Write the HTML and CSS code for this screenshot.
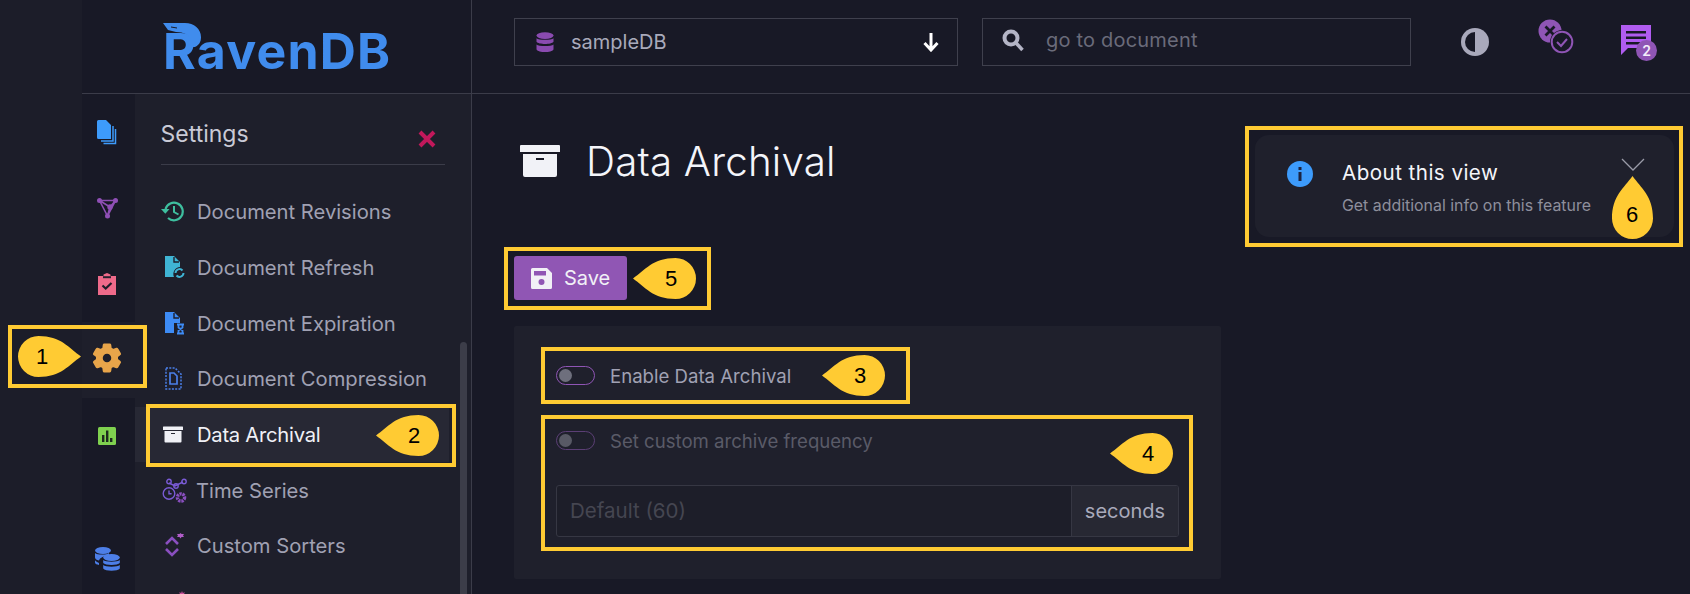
FILE: index.html
```html
<!DOCTYPE html>
<html>
<head>
<meta charset="utf-8">
<title>Data Archival</title>
<link rel="stylesheet" href="styles.css">
</head>
<body>
<svg class="defs" width="0" height="0">
	<symbol id="dropH" viewBox="0 0 63 41"><path d="M0 20.500C12 12 20 0 42.500 0a20.500 20.500 0 0 1 0 41C20 41 12 29 0 20.500z"/></symbol>
	<symbol id="dropV" viewBox="0 0 41 63"><path d="M20.500 0C12 12 0 20 0 42.500a20.500 20.500 0 0 0 41 0C41 20 29 12 20.500 0z"/></symbol>
	<symbol id="archive" viewBox="0 0 40 32"><path d="M1 0h38a1 1 0 0 1 1 1v6H0V1a1 1 0 0 1 1-1zM3 9h34v21a2 2 0 0 1-2 2H5a2 2 0 0 1-2-2zm13 4v2h8v-2z" fill-rule="evenodd"/></symbol>
</svg>

<div class="app">
	<div class="strip"></div>
	<div class="main">
		<header class="top">
			<div class="brand">
				<span class="logo">RavenDB</span>
				<svg class="beak" width="38" height="24" viewBox="0 0 38 24"><path d="M0 0h22c9 0 16 6 16 14 0 5-2 8-6 10H24c3-3 4-6 3-8-1-4-6-7-14-7L5 7z"/><path d="M8 4l6 1" stroke="#181926" stroke-width="1"/></svg>
			</div>
			<div class="topbar">
				<div class="field field-db">
					<svg width="18" height="21" viewBox="0 0 18 21"><g fill="#8a4bb0"><ellipse cx="9" cy="3.600" rx="8.500" ry="3.400"/><path d="M.5 6.200c2 2 15 2 17 0v3.600c-2 3-15 3-17 0zM.5 12.400c2 2 15 2 17 0v5c-2 3.500-15 3.500-17 0z"/></g></svg>
					<span class="field-text">sampleDB</span>
					<svg width="16" height="19" viewBox="0 0 16 19"><path d="M8 0v16M1.500 10L8 17l6.500-7" fill="none" stroke="#fff" stroke-width="3"/></svg>
				</div>
				<div class="field field-search">
					<svg width="22" height="23" viewBox="0 0 22 23"><circle cx="9" cy="9" r="6.500" fill="none" stroke="#b4b5c6" stroke-width="4"/><path d="M14 14l6.500 7" stroke="#b4b5c6" stroke-width="3.500"/></svg>
					<span class="placeholder">go to document</span>
				</div>
				<div class="top-icons">
					<svg width="28" height="28" viewBox="0 0 28 28"><circle cx="14" cy="14" r="14" fill="#a9a9bb"/><path d="M14 4a10 10 0 0 0 0 20z" fill="#181926"/></svg>
					<svg class="ic-status" width="36" height="35" viewBox="0 0 36 35"><circle cx="12" cy="12" r="11.500" fill="#8f55b5"/><path d="M7.500 7.500l9 9m0-9l-9 9" stroke="#181926" stroke-width="2.800"/><circle cx="24" cy="23" r="12" fill="#181926"/><circle cx="24" cy="23" r="10.300" fill="none" stroke="#8f55b5" stroke-width="2"/><path d="M19 23l4 4 6-7" fill="none" stroke="#8f55b5" stroke-width="2"/></svg>
					<div class="notify">
						<svg width="30" height="30" viewBox="0 0 30 30"><path d="M0 0h30v23H7l-7 7zM5 6v2.500h20V6zm0 5.500V14h20v-2.500zM5 17v2.500h14V17z" fill="#b05cf0" fill-rule="evenodd"/></svg>
						<span class="badge">2</span>
					</div>
				</div>
			</div>
		</header>

		<div class="below">
			<nav class="rail">
				<div class="rail-item">
					<svg width="20" height="25" viewBox="0 0 20 25"><path d="M1.500 0H9l5 5v14H1.500A1.500 1.500 0 0 1 0 17.500v-16A1.500 1.500 0 0 1 1.500 0z" fill="#3d9bfb"/><path d="M16 6v15H4M18.500 9v14.500H6.500" fill="none" stroke="#3d9bfb" stroke-width="1.500"/></svg>
				</div>
				<div class="rail-item">
					<svg width="21" height="21" viewBox="0 0 21 21"><g fill="none" stroke="#8f4fb5" stroke-width="1.600"><path d="M2.500 2.500l8 15.500L18.500 2.500zM2.500 2.500L13 9M18.500 2.500L13 9M10.500 18L13 9"/></g><g fill="#8f4fb5"><circle cx="2.500" cy="2.500" r="2.500"/><circle cx="18.500" cy="2.500" r="2.500"/><circle cx="10.500" cy="18" r="2.500"/><circle cx="13" cy="9" r="2.700"/></g></svg>
				</div>
				<div class="rail-item">
					<svg width="18" height="22" viewBox="0 0 18 22"><path d="M0 3h5.500V1.500L9 0l3.500 1.500V3H18v19H0z" fill="#ee6a8a"/><path d="M5 3.200h8v2H5z" fill="#26212e"/><path d="M4.500 12.500l3.200 3 5.800-5.500" fill="none" stroke="#1c1d29" stroke-width="2.200"/></svg>
				</div>
				<div class="rail-item rail-active">
					<svg width="34" height="34" viewBox="0 0 24 24"><path d="M19.140 12.940c.04-.3.060-.61.060-.94 0-.32-.02-.64-.07-.94l2.030-1.580c.18-.14.230-.41.120-.61l-1.920-3.320c-.12-.22-.37-.29-.59-.22l-2.390.96c-.5-.38-1.030-.7-1.620-.94l-.36-2.540c-.04-.24-.24-.41-.48-.41h-3.840c-.24 0-.43.170-.47.410l-.36 2.540c-.59.240-1.130.570-1.620.940l-2.390-.96c-.22-.08-.47 0-.59.220L2.740 8.870c-.12.210-.08.470.120.610l2.030 1.580c-.05.300-.09.630-.09.940s.020.640.070.940l-2.030 1.580c-.18.140-.23.410-.12.610l1.920 3.320c.12.220.370.290.590.220l2.390-.96c.5.380 1.030.700 1.620.940l.36 2.540c.05.240.240.410.480.410h3.840c.24 0 .44-.17.470-.41l.36-2.540c.59-.24 1.130-.56 1.620-.94l2.390.96c.22.080.47 0 .59-.22l1.920-3.320c.12-.22.070-.47-.12-.61l-2.010-1.580zM12 15.600c-1.980 0-3.600-1.620-3.600-3.600s1.620-3.600 3.600-3.600 3.600 1.620 3.600 3.600-1.620 3.600-3.600 3.600z" fill="#e8a54a" stroke="#e8a54a" stroke-width="1.200"/></svg>
				</div>
				<div class="rail-item">
					<svg width="18" height="18" viewBox="0 0 18 18"><rect width="18" height="18" rx="1.500" fill="#7fd14f"/><path d="M4 8h2.400v7H4zM8 3.500h2.400V15H8zM12 11h2.400v4H12z" fill="#1c2a1e"/></svg>
				</div>
				<div class="rail-item rail-last">
					<svg width="25" height="25" viewBox="0 0 25 25"><g fill="#4d7fe8"><ellipse cx="8" cy="3.500" rx="8" ry="3.500"/><path d="M0 6c2 2 12 2 14 0v2.500c-8 1-9 3-10 5-3-.5-4-2-4-3zM0 13c0 1 2 2 4 3v2c-2-.5-4-1-4-2.500z"/><ellipse cx="16.500" cy="10.500" rx="8.300" ry="3.500"/><path d="M8.200 13c2 2.200 14.600 2.200 16.600 0v3c-2 2.500-14.600 2.500-16.600 0zM8.200 18c2 2.200 14.600 2.200 16.600 0v3.500c-2 3-14.600 3-16.600 0z"/></g></svg>
				</div>
			</nav>

			<aside class="sidebar">
				<div class="side-head">
					<span class="side-title">Settings</span>
					<svg width="18" height="18" viewBox="0 0 18 18"><path d="M2 2l14 14M16 2L2 16" stroke="#c2185b" stroke-width="4"/></svg>
				</div>
				<ul class="menu">
					<li class="menu-item">
						<span class="menu-icon"><svg width="24" height="21" viewBox="0 0 24 21"><path d="M4.500 8a8.800 8.800 0 1 1 2.500 9" fill="none" stroke="#3ebf9f" stroke-width="2.200"/><path d="M0 8h8.500l-4.200 4.800z" fill="#3ebf9f"/><path d="M13 5v6l4.500 2.500" fill="none" stroke="#3ebf9f" stroke-width="2"/></svg></span>
						Document Revisions
					</li>
					<li class="menu-item">
						<span class="menu-icon"><svg class="ic-doc" width="21" height="23" viewBox="0 0 21 23"><path d="M0 0h9l6 6v5a7 7 0 0 0-6 10H0z" fill="#3fb4d4"/><path d="M9 1v5h5" fill="none" stroke="#1e1f2b" stroke-width="1.400"/><path d="M10.500 17a4 4 0 0 1 7-2.500M18.500 17a4 4 0 0 1-7 2.500" fill="none" stroke="#3fb4d4" stroke-width="2"/></svg></span>
						Document Refresh
					</li>
					<li class="menu-item">
						<span class="menu-icon"><svg class="ic-doc" width="21" height="23" viewBox="0 0 21 23"><path d="M0 0h9l6 6v5H9v10H0z" fill="#3d8bf5"/><path d="M9 1v5h5" fill="none" stroke="#1e1f2b" stroke-width="1.400"/><path d="M12 12.500h7M12 21.500h7M13.500 13v2.500l4 3v2.500M17.500 13v2.500l-4 3v2.500" fill="none" stroke="#3d8bf5" stroke-width="1.800"/></svg></span>
						Document Expiration
					</li>
					<li class="menu-item">
						<span class="menu-icon"><svg class="ic-doc" width="17" height="23" viewBox="0 0 17 23"><path d="M1 1h9l6 6v15H1z" fill="none" stroke="#4a7fe8" stroke-width="1.500" stroke-dasharray="2 1.300"/><path d="M5 6h4l3 3v8H5z" fill="none" stroke="#4a7fe8" stroke-width="1.700"/></svg></span>
						Document Compression
					</li>
					<li class="menu-item menu-active">
						<span class="menu-icon"><svg class="ic-box" width="20" height="17"><use href="#archive"/></svg></span>
						<span class="active-text">Data Archival</span>
					</li>
					<li class="menu-item menu-time">
						<span class="menu-icon"><svg width="26" height="25" viewBox="0 0 26 25"><g fill="none" stroke="#7a5bd6" stroke-width="1.400"><circle cx="8" cy="15.500" r="5.800"/><path d="M8 12.500v3.300h2.600M8 5l6 3 8-4"/><circle cx="8" cy="3.500" r="2.200"/><circle cx="15" cy="8" r="2.200"/><circle cx="23" cy="3.500" r="2.200"/></g><circle cx="20" cy="19.500" r="3.600" fill="none" stroke="#8a4fc0" stroke-width="3.400" stroke-dasharray="2.200 .8"/></svg></span>
						Time Series
					</li>
					<li class="menu-item">
						<span class="menu-icon"><svg class="ic-sort" width="20" height="24" viewBox="0 0 20 24"><path d="M1 11l6-6 6 6M1 16l6 6 6-6" fill="none" stroke="#8a4fc0" stroke-width="2.600"/><path d="M12 4l1-1.500L12 1h2.500L15.500 0l1 1H19l-1 1.500L19 4h-2.500l-1 1.500-1-1.500z" fill="#b05cc8"/></svg></span>
						Custom Sorters
					</li>
					<li class="menu-item">
						<span class="menu-icon"><svg class="ic-star" width="8" height="8" viewBox="0 0 8 8"><path d="M4 0l.8 2 2-.7-.8 2 2 1-2 .8.800 2-2-.800-.8 2-.8-2-2 .8.800-2-2-.8 2-1-.8-2 2 .7z" fill="#c74f9b"/></svg></span>
					</li>
				</ul>
				<div class="scroll-thumb"></div>
			</aside>

			<main class="content">
				<div class="col-main">
					<div class="page-title">
						<svg class="title-icon" width="40" height="32"><use href="#archive"/></svg>
						<h1>Data Archival</h1>
					</div>
					<button class="save-btn">
						<svg width="21" height="21" viewBox="0 0 21 21"><path d="M1.500 0H16l5 5v14.500a1.500 1.500 0 0 1-1.500 1.500h-18A1.500 1.500 0 0 1 0 19.500v-18A1.500 1.500 0 0 1 1.500 0zM3 3v4.500h12V3zm7.500 8a3 3 0 1 0 0 6 3 3 0 0 0 0-6z" fill="#f1f0f6" fill-rule="evenodd"/></svg>
						Save
					</button>
					<section class="panel">
						<div class="toggle-row">
							<span class="toggle"></span>
							<span class="toggle-label">Enable Data Archival</span>
						</div>
						<div class="toggle-row is-off">
							<span class="toggle"></span>
							<span class="toggle-label">Set custom archive frequency</span>
						</div>
						<div class="input-group">
							<span class="input-ph">Default (60)</span>
							<span class="input-addon">seconds</span>
						</div>
					</section>
				</div>
				<div class="col-side">
					<div class="about">
						<svg width="26" height="26" viewBox="0 0 26 26"><circle cx="13" cy="13" r="13" fill="#3d9bfb"/><path d="M11.500 11h3v9h-3zM11.500 6h3v3h-3z" fill="#1c2340"/></svg>
						<div class="about-text">
							<div class="about-title">About this view</div>
							<div class="about-sub">Get additional info on this feature</div>
						</div>
						<svg class="chevron" width="24" height="14" viewBox="0 0 24 14"><path d="M1 1l11 11L23 1" fill="none" stroke="#9a9ba8" stroke-width="1.300"/></svg>
					</div>
				</div>
			</main>
		</div>
	</div>
</div>

<!-- screenshot annotations -->
<div class="mark mark-1"></div>
<div class="mark mark-2"></div>
<div class="mark mark-3"></div>
<div class="mark mark-4"></div>
<div class="mark mark-5"></div>
<div class="mark mark-6"></div>

<div class="drop drop-1"><svg class="flip" width="63" height="41"><use href="#dropH"/></svg><span>1</span></div>
<div class="drop drop-2"><svg width="63" height="41"><use href="#dropH"/></svg><span>2</span></div>
<div class="drop drop-3"><svg width="63" height="41"><use href="#dropH"/></svg><span>3</span></div>
<div class="drop drop-4"><svg width="63" height="41"><use href="#dropH"/></svg><span>4</span></div>
<div class="drop drop-5"><svg width="63" height="41"><use href="#dropH"/></svg><span>5</span></div>
<div class="drop drop-6"><svg width="41" height="63"><use href="#dropV"/></svg><span>6</span></div>
</body>
</html>
```

FILE: styles.css
```css
* {margin:0; padding:0; box-sizing:border-box;}

html, body {width:1690px; height:594px; overflow:hidden;}
body {background:#181926; font-family:Inter, "Noto Sans", sans-serif; color:#a3a4b6; position:relative;}
.defs {position:absolute;}

.app {display:flex; height:594px;}
.strip {width:82px; background:#1c1d29;}
.main {flex:1; display:flex; flex-direction:column; min-width:0;}

/* top bar */
.top {display:flex; height:94px; border-bottom:1px solid #3b3c49; flex:none;}
.brand {width:390px; border-right:1px solid #3b3c49; position:relative; padding:21px 0 0 81px;}
.logo {font-family:Inter, sans-serif; font-weight:700; font-size:50px; line-height:60px; color:#408ced; letter-spacing:1.200px;}
.beak {position:absolute; left:81px; top:23px; fill:#408ced;}
.topbar {flex:1; display:flex; padding:18px 0 0 42px;}
.field {height:48px; border:1px solid #3f404d; display:flex; align-items:center;}
.field-db {width:444px; padding:0 18px 0 21px;}
.field-text {font-size:20px; margin-left:17px; color:#a9aabb; flex:1;}
.field-search {width:429px; margin-left:24px; padding:0 0 4px 19px;}
.placeholder {font-size:20px; margin-left:22px; color:#6a6b7a; letter-spacing:.2px;}
.top-icons {display:flex; align-items:center; margin-left:50px; height:48px;}
.ic-status {margin-left:49px; margin-top:-12px;}
.notify {position:relative; margin-left:47px; width:30px; height:30px; margin-top:-4px;}
.badge {position:absolute; left:15px; top:15px; width:21px; height:21px; border-radius:50%; background:#8f55b5; color:#f4eefa; font-size:14px; font-weight:600; line-height:21px; text-align:center;}

.below {flex:1; display:flex; min-height:0;}

/* icon rail */
.rail {width:53px; flex:none; display:flex; flex-direction:column;}
.rail-item {height:76px; display:flex; align-items:center; justify-content:center; flex:none; padding-right:3px;}
.rail-active {background:#1e1f2b; padding-bottom:4px;}
.rail-last {margin-top:47px;}

/* settings menu */
.sidebar {width:337px; flex:none; background:#1e1f2b; border-right:1px solid #3b3c49; position:relative; overflow:hidden; padding-top:24px;}
.side-head {margin:0 26px; height:47px; border-bottom:1px solid #3b3c49; display:flex; justify-content:space-between;}
.side-title {font-size:23px; color:#c9cad6; line-height:28px; margin:2px 0 0 -.5px;}
.side-head svg {margin:12px 9px 0 0;}
.menu {list-style:none; margin-top:19px;}
.menu-item {height:55.700px; display:flex; align-items:center; font-size:20.200px; color:#a0a1b3; padding-left:26px; white-space:nowrap;}
.menu-icon {width:36px; height:26px; display:flex; align-items:center; flex:none;}
.menu-active {background:#272834; color:#f0f1f6; margin-right:22px;}
.active-text {letter-spacing:-.25px;}
.menu-time .menu-icon {width:35px;}
.ic-box {fill:#f0f1f6; margin-left:2px;}
.ic-doc {margin-left:4px;}
.ic-sort {margin-left:4px; margin-top:-2px;}
.ic-star {margin:-14px 0 0 17px;}
.scroll-thumb {position:absolute; right:4px; top:248px; width:7px; height:300px; border-radius:4px; background:#3c3d49;}

/* page */
.content {flex:1; display:flex; padding:43px 7px 0 42px; min-width:0;}
.col-main {width:707px; flex:none;}
.col-side {margin-left:34px; flex:1;}
.page-title {display:flex; align-items:center; height:48px; margin-left:6px;}
.title-icon {fill:#f1f2f7;}
.page-title h1 {font-size:40.300px; font-weight:300; color:#f4f5fa; margin-left:26px; letter-spacing:.2px;}
.save-btn {display:flex; align-items:center; width:113px; height:44px; margin-top:71px; background:#9056b4; border:0; border-radius:3px; color:#f1f0f6; font:inherit; font-size:20px; padding-left:17px; gap:12px;}
.panel {margin-top:26px; height:253px; background:#1f202c; border-radius:2px; padding:40px 42px 0;}
.toggle-row {display:flex; align-items:center; height:19px; font-size:18.600px; color:#a0a1b3; margin-bottom:46px;}
.toggle {width:39px; height:19px; border:1px solid #8f55b5; border-radius:10px; position:relative; margin-right:15px; flex:none;}
.toggle:before {content:""; position:absolute; left:2px; top:2px; width:13px; height:13px; border-radius:50%; background:#6e6f7d;}
.is-off {color:#5a5b68; margin-bottom:35px;}
.is-off .toggle {border-color:#5b3f75;}
.is-off .toggle:before {background:#585965;}
.input-group {display:flex; width:623px; height:52px; border:1px solid #363743; border-radius:3px; overflow:hidden; background:#1d1e29;}
.input-ph {flex:1; font-size:20.500px; color:#454651; padding-left:13px; line-height:50px;}
.input-addon {width:107px; border-left:1px solid #363743; background:#272833; text-align:center; font-size:20px; line-height:50px; color:#a9aabb;}

.about {width:419px; height:102px; margin-top:-2px; background:#1f202c; border-radius:14px; display:flex; position:relative; padding:26px 0 0 32px;}
.about-text {margin-left:29px;}
.about-title {font-size:20.600px; color:#f4f5fa; line-height:24px; letter-spacing:.45px;}
.about-sub {font-size:15.900px; color:#8e8f9c; margin-top:11px; line-height:20px;}
.chevron {position:absolute; left:366px; top:23px;}

/* yellow frames and numbered drops from the docs screenshot */
.mark {position:absolute; border:4px solid #ffcb33;}
.mark-1 {left:8px; top:325px; width:139px; height:63px;}
.mark-2 {left:146px; top:404px; width:310px; height:63px;}
.mark-3 {left:541px; top:347px; width:369px; height:57px;}
.mark-4 {left:541px; top:415px; width:652px; height:136px;}
.mark-5 {left:504px; top:247px; width:207px; height:63px;}
.mark-6 {left:1245px; top:126px; width:438px; height:121px;}

.drop {position:absolute; fill:#ffcb33;}
.drop svg {display:block;}
.drop .flip {transform:scaleX(-1);}
.drop span {position:absolute; font-family:"Liberation Sans", sans-serif; font-size:22px; line-height:24px; color:#000; width:20px; text-align:center;}
.drop-1 {left:18px; top:336px;}
.drop-1 span {left:14px; top:9px;}
.drop-2 {left:376px; top:415px;}
.drop-2 span {left:28px; top:9px;}
.drop-3 {left:822px; top:355px;}
.drop-3 span {left:28px; top:9px;}
.drop-4 {left:1110px; top:433px;}
.drop-4 span {left:28px; top:9px;}
.drop-5 {left:633px; top:258px;}
.drop-5 span {left:28px; top:9px;}
.drop-6 {left:1612px; top:176px;}
.drop-6 span {left:10px; top:27px;}
```
